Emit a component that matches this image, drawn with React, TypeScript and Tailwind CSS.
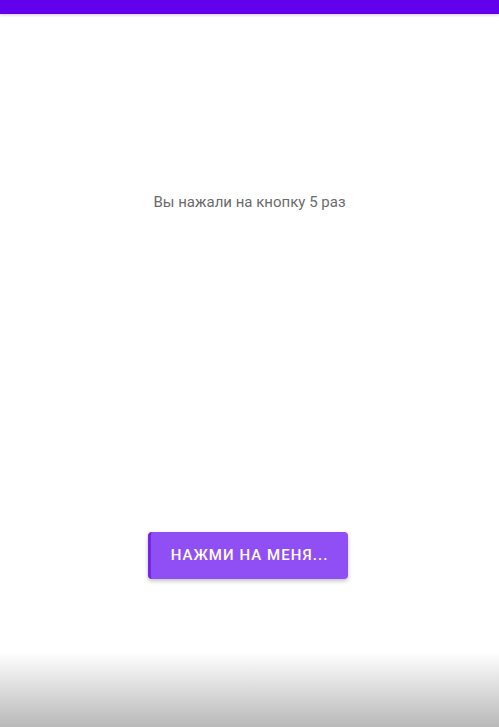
export default function App() {
  return (
    <div className="relative flex h-[727px] w-[499px] flex-col bg-white font-['Roboto',sans-serif]">
      <div className="h-[14px] w-full bg-[#6200ee] shadow-[0_1px_3px_rgba(98,0,238,0.25)]" />
      <div className="flex flex-col items-center pt-[179px]">
        <p className="text-[15px] leading-[18px] text-[#6b6b6b]">Вы нажали на кнопку 5 раз</p>
      </div>
      <div className="flex justify-center pt-[321px] pr-[3px]">
        <button className="flex h-[47px] w-[200px] items-center justify-center rounded-[4px] border-l-[3px] border-[#7326e6] bg-[#904ff5] text-[15px] font-medium tracking-[0.07em] text-white shadow-[0_2px_4px_rgba(0,0,0,0.25)]">
          НАЖМИ НА МЕНЯ...
        </button>
      </div>
      <div className="absolute bottom-0 left-0 h-[75px] w-full bg-gradient-to-b from-white to-[#b9b9b9]" />
    </div>
  );
}
